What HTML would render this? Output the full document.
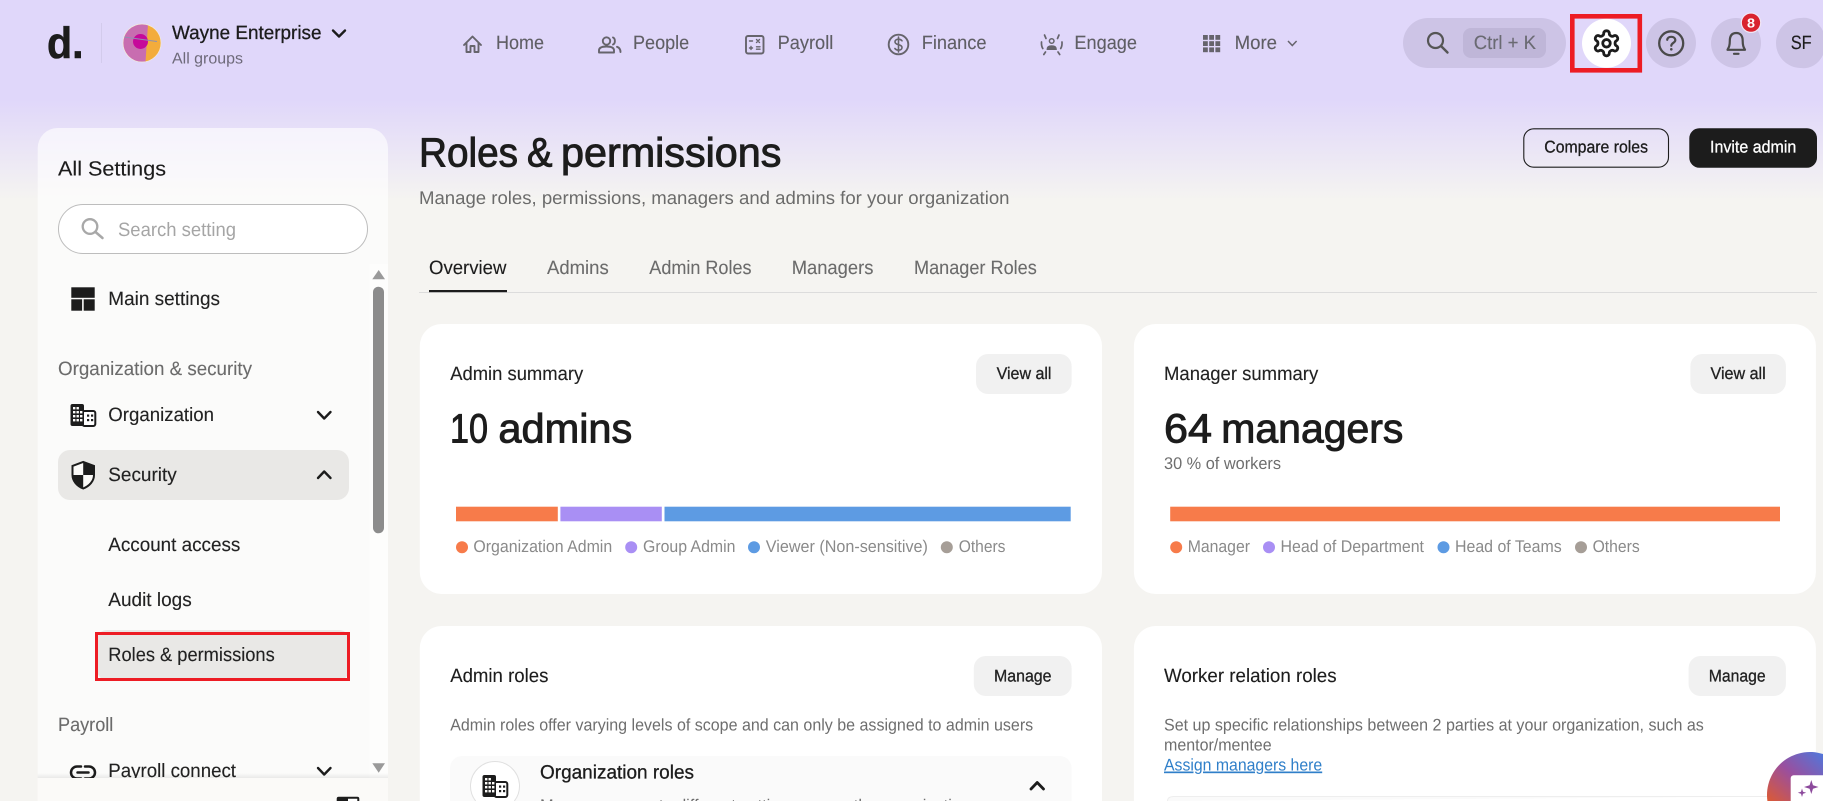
<!DOCTYPE html>
<html lang="en">
<head>
<meta charset="utf-8">
<title>Roles &amp; permissions</title>
<style>
html,body{margin:0;padding:0;width:1823px;height:801px;overflow:hidden;background:#f5f4f1}
svg{display:block}
text{font-family:"Liberation Sans",Arial,sans-serif;text-rendering:geometricPrecision;white-space:pre}
.b{font-size:19.3px;fill:#222;stroke:#222;stroke-width:.12px}
.s{font-size:16.9px;fill:#6e6e6e}
.n{font-size:19.3px;fill:#5f5e64;stroke:#5f5e64;stroke-width:.12px}
.g{font-size:19.3px;fill:#6b6b6b;stroke:#6b6b6b;stroke-width:.1px}
.l{font-size:16.9px;fill:#8a8a8a}
.m{stroke:currentColor;stroke-width:.3px}
.h{font-size:41px;fill:#1c1c1c;stroke:#1c1c1c;stroke-width:.95px}
.ic{fill:none;stroke:#66646c;stroke-width:1.9;stroke-linecap:round;stroke-linejoin:round}
.ch{fill:none;stroke:#1c1c1c;stroke-width:2.4;stroke-linecap:round;stroke-linejoin:round}
</style>
</head>
<body>
<svg xmlns="http://www.w3.org/2000/svg" width="1823" height="801" viewBox="0 0 1823 801">
<defs>
<linearGradient id="bg" x1="0" y1="0" x2="0" y2="1"><stop offset="0" stop-color="#e0d7fa"/><stop offset=".125" stop-color="#e0d7fa"/><stop offset=".25" stop-color="#f5f4f1"/><stop offset="1" stop-color="#f5f4f1"/></linearGradient>
<linearGradient id="fab" x1="1" y1="0" x2="0" y2="1"><stop offset="0" stop-color="#4f78dc"/><stop offset=".5" stop-color="#9a4f9e"/><stop offset="1" stop-color="#dc5a34"/></linearGradient>
<linearGradient id="fs" x1="0" y1="0" x2="0" y2="1"><stop offset="0" stop-color="#000" stop-opacity="0"/><stop offset="1" stop-color="#000" stop-opacity=".07"/></linearGradient>
<clipPath id="av"><circle cx="142" cy="43" r="19"/></clipPath>
</defs>
<rect width="1823" height="801" fill="url(#bg)"/>

<!-- header left -->
<text x="47" y="58" font-size="44" font-weight="700" fill="#1c1c1c" stroke="#1c1c1c" stroke-width=".6" textLength="36.500" lengthAdjust="spacingAndGlyphs">d.</text>
<rect x="101" y="23" width="1" height="40" fill="#d3cbec"/>
<g clip-path="url(#av)">
<circle cx="142" cy="43" r="19" fill="#f3ac3c"/>
<path d="M123 24 H148 L145.500 62 H123 Z" fill="#c86db0"/>
<circle cx="140.500" cy="41.500" r="7.500" fill="#c6089a"/>
<path d="M124 37 L157 41.500" stroke="#8f8fb0" stroke-width="1"/>
</g>
<circle cx="142" cy="43" r="19" fill="none" stroke="#f3ecd8" stroke-width=".7"/>
<text x="172" y="39" class="b m" style="color:#1c1c1c;fill:#1c1c1c" textLength="149.500" lengthAdjust="spacingAndGlyphs">Wayne Enterprise</text>
<polyline class="ch" points="333,30.500 339,36.500 345,30.500"/>
<text x="172" y="63.300" font-size="15.700" fill="#6e6a7a" textLength="71" lengthAdjust="spacingAndGlyphs">All groups</text>

<!-- nav -->
<path class="ic" d="M464 45 L472.500 36.500 L481 45 M466.500 43 V52 H470.500 V46 H474.500 V52 H478.500 V43"/>
<text x="496" y="49" class="n" textLength="48" lengthAdjust="spacingAndGlyphs">Home</text>
<g class="ic"><circle cx="606.500" cy="41" r="3.700"/><path d="M599 52.500 V50.500 C599 47.500 602 46.500 606.500 46.500 C611 46.500 614 47.500 614 50.500 V52.500 Z"/><path d="M613 37.500 C615.500 38.500 615.500 43.500 613 44.500 M617 46.800 C619 47.500 620.500 49 620.500 52"/></g>
<text x="633" y="49" class="n" textLength="56.200" lengthAdjust="spacingAndGlyphs">People</text>
<g class="ic"><rect x="746" y="36" width="17.500" height="17.500" rx="2"/><path stroke-width="1.400" d="M749.500 41 H752.500 M756.500 39.500 L759.500 42.500 M759.500 39.500 L756.500 42.500 M749.500 48 H752.500 M751 46.500 V49.500 M756.500 46.800 H760 M756.500 49.200 H760"/></g>
<text x="777.600" y="49" class="n" textLength="55.700" lengthAdjust="spacingAndGlyphs">Payroll</text>
<g class="ic"><circle cx="898.500" cy="44.500" r="9.800"/><path stroke-width="1.600" d="M902 40.800c-.8-1.100-2-1.600-3.500-1.600-2 0-3.500 1-3.500 2.700s1.500 2.300 3.500 2.800c2 .5 3.500 1.100 3.500 2.800s-1.500 2.700-3.500 2.700c-1.500 0-2.800-.6-3.600-1.700 M898.500 37V52"/></g>
<text x="921.700" y="49" class="n" textLength="64.900" lengthAdjust="spacingAndGlyphs">Finance</text>
<g class="ic"><path d="M1046 38.500 L1044.500 35 M1057.500 38.500 L1059 35 M1041.500 42 C1041.300 45 1041.800 47 1042.800 48.500 M1062 42 C1062.200 45 1061.700 47 1060.700 48.500 M1045.500 52 L1043.800 54.500 M1058 52 L1059.700 54.500" stroke-width="1.700"/><circle cx="1051.700" cy="41" r="2.300" stroke-width="1.500"/><path d="M1047 49.500 C1047 46.800 1049 45.800 1051.700 45.800 C1054.400 45.800 1056.400 46.800 1056.400 49.500 Z" fill="#66646c" stroke-width="1"/></g>
<text x="1074.400" y="49" class="n" textLength="62.600" lengthAdjust="spacingAndGlyphs">Engage</text>
<g fill="#66646c"><rect x="1203" y="35" width="4.800" height="4.800"/><rect x="1209.200" y="35" width="4.800" height="4.800"/><rect x="1215.400" y="35" width="4.800" height="4.800"/><rect x="1203" y="41.200" width="4.800" height="4.800"/><rect x="1209.200" y="41.200" width="4.800" height="4.800"/><rect x="1215.400" y="41.200" width="4.800" height="4.800"/><rect x="1203" y="47.400" width="4.800" height="4.800"/><rect x="1209.200" y="47.400" width="4.800" height="4.800"/><rect x="1215.400" y="47.400" width="4.800" height="4.800"/></g>
<text x="1234.600" y="49" class="n" textLength="42.400" lengthAdjust="spacingAndGlyphs">More</text>
<polyline points="1288,41 1292.300,45.500 1296.600,41" fill="none" stroke="#66646c" stroke-width="1.500"/>

<!-- header right -->
<rect x="1403" y="18" width="163" height="50" rx="25" fill="#cdc4e6"/>
<circle cx="1435.500" cy="40.500" r="7.500" fill="none" stroke="#555" stroke-width="2.200"/>
<path d="M1441 46 L1447.500 52.500" stroke="#555" stroke-width="2.400" stroke-linecap="round"/>
<rect x="1463" y="28" width="83" height="30" rx="8" fill="#bfb6d8"/>
<text x="1473.700" y="49" class="n" style="fill:#6a6a72;stroke:#6a6a72" textLength="62.300" lengthAdjust="spacingAndGlyphs">Ctrl + K</text>

<circle cx="1606.500" cy="43.300" r="24.500" fill="#fff"/>
<g transform="translate(1591.500 28.300) scale(1.25)" fill="none" stroke="#1c1c1c" stroke-width="2.250" stroke-linejoin="round"><path d="M12.220 2h-.44a2 2 0 0 0-2 2v.18a2 2 0 0 1-1 1.730l-.43.25a2 2 0 0 1-2 0l-.15-.08a2 2 0 0 0-2.730.73l-.22.38a2 2 0 0 0 .73 2.730l.15.1a2 2 0 0 1 1 1.720v.51a2 2 0 0 1-1 1.740l-.15.09a2 2 0 0 0-.73 2.730l.22.38a2 2 0 0 0 2.730.73l.15-.08a2 2 0 0 1 2 0l.43.25a2 2 0 0 1 1 1.730V20a2 2 0 0 0 2 2h.44a2 2 0 0 0 2-2v-.18a2 2 0 0 1 1-1.730l.43-.25a2 2 0 0 1 2 0l.15.08a2 2 0 0 0 2.730-.73l.22-.39a2 2 0 0 0-.73-2.730l-.15-.08a2 2 0 0 1-1-1.740v-.5a2 2 0 0 1 1-1.740l.15-.09a2 2 0 0 0 .73-2.730l-.22-.38a2 2 0 0 0-2.730-.73l-.15.08a2 2 0 0 1-2 0l-.43-.25a2 2 0 0 1-1-1.730V4a2 2 0 0 0-2-2z"/><circle cx="12" cy="12" r="3"/></g>
<rect x="1572.300" y="16.300" width="67.500" height="54" fill="none" stroke="#ed1c24" stroke-width="4.600"/>

<circle cx="1671" cy="43" r="25" fill="#cdc4e6"/>
<circle cx="1671.200" cy="43.300" r="12" fill="none" stroke="#4a4a4a" stroke-width="2.300"/>
<path d="M1667.200 39.800 C1667.500 37.800 1669.200 36.800 1671.200 36.800 C1673.500 36.800 1675.300 38.200 1675.300 40.200 C1675.300 42.800 1671.300 42.900 1671.300 45.800" fill="none" stroke="#4a4a4a" stroke-width="2.200" stroke-linecap="round"/>
<circle cx="1671.300" cy="49.300" r="1.300" fill="#4a4a4a"/>

<circle cx="1736" cy="43" r="25" fill="#cdc4e6"/>
<path d="M1736.300 33 C1731.500 33 1729.800 36.500 1729.800 41 C1729.800 46 1728.800 47.500 1727.500 49.800 H1745 C1743.700 47.500 1742.700 46 1742.700 41 C1742.700 36.500 1741 33 1736.300 33 Z M1734 53.800 H1738.500" fill="none" stroke="#4a4a4a" stroke-width="2.200" stroke-linejoin="round" stroke-linecap="round"/>
<circle cx="1751" cy="22.700" r="9.700" fill="#d9232e" stroke="#f0e6f5" stroke-width="1.200"/>
<text x="1747" y="27.300" font-size="13" font-weight="700" fill="#fff" textLength="8" lengthAdjust="spacingAndGlyphs">8</text>

<path d="M1776 43 a25 25 0 0 1 25 -25 a22 25 0 0 1 22 13 V55 a22 25 0 0 1 -22 13 a25 25 0 0 1 -25 -25 Z" fill="#cdc4e6"/>
<text x="1790.700" y="49" class="b" style="fill:#1c1c1c" textLength="21" lengthAdjust="spacingAndGlyphs">SF</text>

<!-- sidebar -->
<path d="M37.700 801 V148 a20 20 0 0 1 20 -20 H368 a20 20 0 0 1 20 20 V801 Z" fill="#fff" fill-opacity=".62"/>
<text x="58" y="175.700" font-size="20.500" fill="#1c1c1c" stroke="#1c1c1c" stroke-width=".12" textLength="108" lengthAdjust="spacingAndGlyphs">All Settings</text>
<rect x="58.500" y="204.500" width="309" height="49" rx="24.500" fill="#fff" stroke="#bdbdbd"/>
<circle cx="90" cy="226.500" r="7.300" fill="none" stroke="#a8a8a8" stroke-width="2.300"/>
<path d="M95.500 232 L102.500 238" stroke="#a8a8a8" stroke-width="2.500" stroke-linecap="round"/>
<text x="118" y="236" class="b" style="fill:#a5a5a5;stroke:none" textLength="118" lengthAdjust="spacingAndGlyphs">Search setting</text>

<rect x="369.500" y="264" width="18.500" height="514" fill="#fdfdfc"/>
<path d="M372.300 279.300 L378.700 270 L385 279.300 Z" fill="#9a9a9a"/>
<rect x="373" y="286.700" width="11" height="246.600" rx="5.500" fill="#8c8c8c"/>
<path d="M372.300 763.300 L378.700 772.700 L385 763.300 Z" fill="#9a9a9a"/>

<g fill="#1c1c1c"><rect x="71.300" y="287.300" width="23.400" height="10.500"/><rect x="71.300" y="299.300" width="10.800" height="11.400"/><rect x="83.700" y="299.300" width="11" height="11.400"/></g>
<text x="108.300" y="305" class="b" textLength="111.700" lengthAdjust="spacingAndGlyphs">Main settings</text>

<text x="58" y="375" class="g" textLength="194" lengthAdjust="spacingAndGlyphs">Organization &amp; security</text>

<g transform="translate(70.500 404)">
<rect x="12" y="7" width="12.800" height="15" rx="2" fill="#fff" stroke="#1c1c1c" stroke-width="2"/>
<rect x="0" y="0" width="13.500" height="22" rx="2" fill="#1c1c1c"/>
<g fill="#fdfcfa"><rect x="2.500" y="3" width="2.400" height="2.400"/><rect x="6" y="3" width="2.400" height="2.400"/><rect x="2.500" y="7" width="2.400" height="2.400"/><rect x="6" y="7" width="2.400" height="2.400"/><rect x="9.500" y="7" width="2.400" height="2.400"/><rect x="2.500" y="11" width="2.400" height="2.400"/><rect x="6" y="11" width="2.400" height="2.400"/><rect x="9.500" y="11" width="2.400" height="2.400"/><rect x="2.500" y="15" width="2.400" height="2.400"/><rect x="6" y="15" width="2.400" height="2.400"/><rect x="9.500" y="15" width="2.400" height="2.400"/></g>
<g fill="#1c1c1c"><rect x="16.500" y="10.500" width="2.200" height="2.200"/><rect x="20.500" y="10.500" width="2.200" height="2.200"/><rect x="16.500" y="15" width="2.200" height="2.200"/><rect x="20.500" y="15" width="2.200" height="2.200"/></g>
</g>
<text x="108.300" y="421" class="b" textLength="105.700" lengthAdjust="spacingAndGlyphs">Organization</text>
<polyline class="ch" points="318,412 324.200,418.500 330.500,412"/>

<rect x="58" y="450" width="291" height="50" rx="12" fill="#e9e8e6"/>
<path d="M83.200 462 L94 466 V475 C94 481 89.500 486 83.200 488.500 C77 486 72.500 481 72.500 475 V466 Z" fill="#fbfaf8" stroke="#1c1c1c" stroke-width="2"/>
<path d="M83.200 462 L94 466 V475 H83.200 Z M83.200 475 V488.500 C77 486 72.500 481 72.500 475 Z" fill="#1c1c1c"/>
<text x="108.300" y="481" class="b" textLength="68.400" lengthAdjust="spacingAndGlyphs">Security</text>
<polyline class="ch" points="318,478 324.200,471.500 330.500,478"/>

<text x="108.300" y="551" class="b" textLength="132" lengthAdjust="spacingAndGlyphs">Account access</text>
<text x="108.300" y="606" class="b" textLength="83.400" lengthAdjust="spacingAndGlyphs">Audit logs</text>
<rect x="97" y="630" width="252" height="50" rx="10" fill="#e9e8e6"/>
<rect x="96.500" y="633.500" width="252" height="46" fill="none" stroke="#ed1c24" stroke-width="3"/>
<text x="108.300" y="661" class="b" textLength="166.400" lengthAdjust="spacingAndGlyphs">Roles &amp; permissions</text>
<text x="58" y="731" class="g" textLength="55.300" lengthAdjust="spacingAndGlyphs">Payroll</text>

<path d="M81 766.500 H77 A6 6 0 0 0 77 778.500 H81 M85 766.500 H89 A6 6 0 0 1 89 778.500 H85 M77.500 772.500 H88.500" fill="none" stroke="#1c1c1c" stroke-width="2.500" stroke-linecap="round"/>
<text x="108.300" y="777" class="b" textLength="127.700" lengthAdjust="spacingAndGlyphs">Payroll connect</text>
<polyline class="ch" points="318,768 324.200,774.500 330.500,768"/>

<rect x="37.700" y="773" width="350.300" height="5" fill="url(#fs)"/>
<rect x="37.700" y="778" width="350.300" height="23" fill="#fbfaf8"/>
<rect x="336.700" y="796.700" width="22.600" height="4.300" fill="#fff"/>
<path d="M336.700 801 V798.700 a2 2 0 0 1 2 -2 H357.300 a2 2 0 0 1 2 2 V801 H357.300 V798.700 H348 V801 Z" fill="#1c1c1c"/>

<!-- page head -->
<text x="419" y="166.700" class="h" textLength="99" lengthAdjust="spacingAndGlyphs">Roles</text>
<text x="527" y="166.700" class="h" textLength="25.500" lengthAdjust="spacingAndGlyphs">&amp;</text>
<text x="561" y="166.700" class="h" textLength="220.400" lengthAdjust="spacingAndGlyphs">permissions</text>
<text x="419" y="204" font-size="18.300" fill="#6b6b6b" textLength="590.500" lengthAdjust="spacingAndGlyphs">Manage roles, permissions, managers and admins for your organization</text>

<rect x="1523.800" y="128.800" width="144.700" height="38.400" rx="10" fill="none" stroke="#1c1c1c" stroke-width="1.100"/>
<text x="1544.300" y="152.700" class="s m" style="fill:#1c1c1c;color:#1c1c1c" textLength="103.700" lengthAdjust="spacingAndGlyphs">Compare roles</text>
<rect x="1689.300" y="128.300" width="127.700" height="39.400" rx="10" fill="#1c1c1c"/>
<text x="1710" y="152.700" class="s m" style="fill:#fff;color:#fff" textLength="86.300" lengthAdjust="spacingAndGlyphs">Invite admin</text>

<!-- tabs -->
<text x="429" y="274" class="b" style="fill:#1c1c1c" textLength="77.400" lengthAdjust="spacingAndGlyphs">Overview</text>
<text x="547" y="274" class="g" textLength="61.700" lengthAdjust="spacingAndGlyphs">Admins</text>
<text x="649.300" y="274" class="g" textLength="102.200" lengthAdjust="spacingAndGlyphs">Admin Roles</text>
<text x="791.700" y="274" class="g" textLength="81.700" lengthAdjust="spacingAndGlyphs">Managers</text>
<text x="914" y="274" class="g" textLength="122.800" lengthAdjust="spacingAndGlyphs">Manager Roles</text>
<rect x="419" y="292" width="1398" height="1" fill="#dcdcdc"/>
<rect x="429" y="290" width="78" height="2.200" fill="#1c1c1c"/>

<!-- admin summary -->
<rect x="419.800" y="324" width="682.200" height="270" rx="22" fill="#fff"/>
<text x="450.200" y="380" class="b" textLength="133" lengthAdjust="spacingAndGlyphs">Admin summary</text>
<rect x="976" y="354" width="95.600" height="40" rx="12" fill="#f1f1f1"/>
<text x="996.600" y="379" class="s m" style="fill:#222;color:#222" textLength="54.900" lengthAdjust="spacingAndGlyphs">View all</text>
<text x="450" y="442.700" class="h" textLength="38" lengthAdjust="spacingAndGlyphs">10</text>
<text x="498.400" y="442.700" class="h" textLength="133.900" lengthAdjust="spacingAndGlyphs">admins</text>
<rect x="456" y="506.700" width="101.800" height="14.600" fill="#f77b4a"/>
<rect x="560.400" y="506.700" width="101.400" height="14.600" fill="#a98ff4"/>
<rect x="664.500" y="506.700" width="406.200" height="14.600" fill="#5d9be3"/>
<circle cx="462" cy="547.300" r="6" fill="#f77b4a"/>
<text x="473.400" y="552" class="l" textLength="138.800" lengthAdjust="spacingAndGlyphs">Organization Admin</text>
<circle cx="631.200" cy="547.300" r="6" fill="#a98ff4"/>
<text x="643" y="552" class="l" textLength="92.400" lengthAdjust="spacingAndGlyphs">Group Admin</text>
<circle cx="754" cy="547.300" r="6" fill="#5d9be3"/>
<text x="765.800" y="552" class="l" textLength="162.100" lengthAdjust="spacingAndGlyphs">Viewer (Non-sensitive)</text>
<circle cx="946.800" cy="547.300" r="6" fill="#a69e97"/>
<text x="958.700" y="552" class="l" textLength="46.800" lengthAdjust="spacingAndGlyphs">Others</text>

<!-- manager summary -->
<rect x="1133.900" y="324" width="682" height="270" rx="22" fill="#fff"/>
<text x="1164" y="380" class="b" textLength="154.200" lengthAdjust="spacingAndGlyphs">Manager summary</text>
<rect x="1690.400" y="354" width="95.500" height="40" rx="12" fill="#f1f1f1"/>
<text x="1710.500" y="379" class="s m" style="fill:#222;color:#222" textLength="55.200" lengthAdjust="spacingAndGlyphs">View all</text>
<text x="1164" y="442.700" class="h" textLength="48" lengthAdjust="spacingAndGlyphs">64</text>
<text x="1221.300" y="442.700" class="h" textLength="182.100" lengthAdjust="spacingAndGlyphs">managers</text>
<text x="1164" y="469" class="s" textLength="117" lengthAdjust="spacingAndGlyphs">30 % of workers</text>
<rect x="1170.200" y="506.700" width="609.800" height="14.600" fill="#f77b4a"/>
<circle cx="1176.200" cy="547.300" r="6" fill="#f77b4a"/>
<text x="1187.700" y="552" class="l" textLength="62.300" lengthAdjust="spacingAndGlyphs">Manager</text>
<circle cx="1269" cy="547.300" r="6" fill="#a98ff4"/>
<text x="1280.500" y="552" class="l" textLength="143.500" lengthAdjust="spacingAndGlyphs">Head of Department</text>
<circle cx="1443.500" cy="547.300" r="6" fill="#5d9be3"/>
<text x="1455" y="552" class="l" textLength="106.700" lengthAdjust="spacingAndGlyphs">Head of Teams</text>
<circle cx="1581" cy="547.300" r="6" fill="#a69e97"/>
<text x="1592.600" y="552" class="l" textLength="47.100" lengthAdjust="spacingAndGlyphs">Others</text>

<!-- admin roles -->
<path d="M419.800 801 V648 a22 22 0 0 1 22 -22 H1080 a22 22 0 0 1 22 22 V801 Z" fill="#fff"/>
<text x="450.200" y="682" class="b" style="fill:#1c1c1c" textLength="98.200" lengthAdjust="spacingAndGlyphs">Admin roles</text>
<rect x="973.800" y="656" width="97.800" height="40" rx="12" fill="#f1f1f1"/>
<text x="994" y="681.500" class="s m" style="fill:#222;color:#222" textLength="57.500" lengthAdjust="spacingAndGlyphs">Manage</text>
<text x="450.200" y="730.500" class="s" textLength="583" lengthAdjust="spacingAndGlyphs">Admin roles offer varying levels of scope and can only be assigned to admin users</text>
<path d="M450 801 V768 a12 12 0 0 1 12 -12 H1059.600 a12 12 0 0 1 12 12 V801 Z" fill="#fafafa"/>
<path d="M475.630 801 A24.500 24.500 0 1 1 514.370 801" fill="#fff" stroke="#e0e0e0"/>
<g transform="translate(482.500 775)">
<rect x="12" y="7" width="12.800" height="15" rx="2" fill="#fff" stroke="#1c1c1c" stroke-width="2"/>
<rect x="0" y="0" width="13.500" height="22" rx="2" fill="#1c1c1c"/>
<g fill="#fdfcfa"><rect x="2.500" y="3" width="2.400" height="2.400"/><rect x="6" y="3" width="2.400" height="2.400"/><rect x="2.500" y="7" width="2.400" height="2.400"/><rect x="6" y="7" width="2.400" height="2.400"/><rect x="9.500" y="7" width="2.400" height="2.400"/><rect x="2.500" y="11" width="2.400" height="2.400"/><rect x="6" y="11" width="2.400" height="2.400"/><rect x="9.500" y="11" width="2.400" height="2.400"/><rect x="2.500" y="15" width="2.400" height="2.400"/><rect x="6" y="15" width="2.400" height="2.400"/><rect x="9.500" y="15" width="2.400" height="2.400"/></g>
<g fill="#1c1c1c"><rect x="16.500" y="10.500" width="2.200" height="2.200"/><rect x="20.500" y="10.500" width="2.200" height="2.200"/><rect x="16.500" y="15" width="2.200" height="2.200"/><rect x="20.500" y="15" width="2.200" height="2.200"/></g>
</g>
<text x="540" y="778.700" class="b m" style="fill:#1c1c1c;color:#1c1c1c" textLength="154" lengthAdjust="spacingAndGlyphs">Organization roles</text>
<polyline class="ch" style="stroke-width:2.800" points="1031,789 1037.200,782.500 1043.500,789"/>
<text x="540" y="811" class="s" textLength="430" lengthAdjust="spacingAndGlyphs">Manage access to different settings across the organization</text>

<!-- worker relation roles -->
<path d="M1133.900 801 V648 a22 22 0 0 1 22 -22 H1793.900 a22 22 0 0 1 22 22 V801 Z" fill="#fff"/>
<text x="1164" y="682" class="b" style="fill:#1c1c1c" textLength="172.600" lengthAdjust="spacingAndGlyphs">Worker relation roles</text>
<rect x="1688.600" y="656" width="97.300" height="40" rx="12" fill="#f1f1f1"/>
<text x="1708.800" y="681.500" class="s m" style="fill:#222;color:#222" textLength="56.900" lengthAdjust="spacingAndGlyphs">Manage</text>
<text x="1164" y="730.500" class="s" textLength="539.800" lengthAdjust="spacingAndGlyphs">Set up specific relationships between 2 parties at your organization, such as</text>
<text x="1164" y="750.500" class="s" textLength="107.600" lengthAdjust="spacingAndGlyphs">mentor/mentee</text>
<text x="1164" y="770.500" class="s" style="fill:#2f7fc9;text-decoration:underline" textLength="158.200" lengthAdjust="spacingAndGlyphs">Assign managers here</text>
<path d="M1167.500 801 Q1167.500 796.500 1174 796.500 H1800" fill="#fafafa" stroke="#eeeeee"/>

<!-- floating -->
<path d="M1767.420 801 A43 43 0 0 1 1823 754.010 V801 Z" fill="url(#fab)"/>
<path d="M1790.700 801 V778.300 a3 3 0 0 1 3 -3 H1823 V801 Z" fill="#fff"/>
<path d="M1811.300 780 L1813 785.300 L1818.500 787 L1813 788.700 L1811.300 794 L1809.600 788.700 L1804 787 L1809.600 785.300 Z" fill="#8c4a9c"/>
<path d="M1802 788.500 L1803 791.700 L1806.200 792.700 L1803 793.700 L1802 797 L1801 793.700 L1797.800 792.700 L1801 791.700 Z" fill="#8c4a9c"/>
</svg>
</body>
</html>
